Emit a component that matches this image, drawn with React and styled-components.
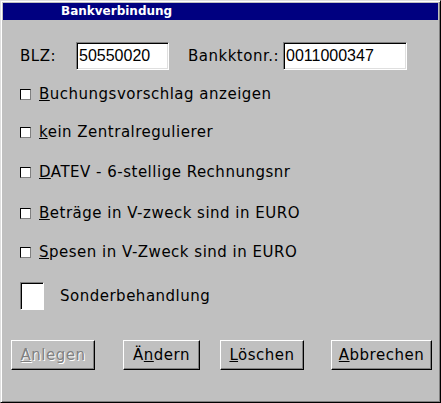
import React from 'react';
import styled, { createGlobalStyle } from 'styled-components';

const Global = createGlobalStyle`
  html, body { margin: 0; padding: 0; background: #c0c0c0; }
  body { font-family: "DejaVu Sans", Verdana, sans-serif; }
`;

const Window = styled.div`
  box-sizing: border-box;
  width: 441px;
  height: 403px;
  background: #c0c0c0;
  border: 1px solid;
  border-color: #dfdfdf #000 #000 #dfdfdf;
  box-shadow: inset 1px 1px 0 #fff, inset -1px -1px 0 #808080;
  padding: 2px;
  display: flex;
  flex-direction: column;
`;

const TitleBar = styled.div`
  height: 17px;
  background: #000080;
  color: #fff;
  font-weight: bold;
  font-size: 12px;
  line-height: 17px;
  padding-left: 58px;
`;

const Body = styled.div`
  flex: 1;
  display: flex;
  flex-direction: column;
  padding: 22px 0 0 17px;
  font-size: 15px;
  letter-spacing: 0.5px;
  color: #000;
`;

const FieldRow = styled.div`
  display: flex;
  align-items: center;
  height: 28px;
`;

const Label = styled.span`
  box-sizing: border-box;
  width: ${p => p.$w}px;
  padding-left: ${p => p.$pl || 0}px;
`;

const Input = styled.div`
  box-sizing: border-box;
  width: ${p => p.$w}px;
  height: 28px;
  background: #fff;
  border: 1px solid;
  border-color: #808080 #fff #fff #808080;
  box-shadow: inset 1px 1px 0 #000, inset -1px -1px 0 #dfdfdf;
  padding: 3px 0 0 2px;
  font-family: "Liberation Sans", Arial, sans-serif;
  font-size: 16px;
  letter-spacing: 0;
  line-height: 20px;
`;

const Checks = styled.div`
  display: flex;
  flex-direction: column;
  margin-top: 14px;
`;

const CheckRow = styled.div`
  display: flex;
  align-items: center;
  height: 20px;
  margin-bottom: ${p => p.$mb}px;
`;

const Box = styled.span`
  box-sizing: border-box;
  flex: none;
  width: 11px;
  height: 11px;
  background: #fff;
  border: 1px solid;
  border-color: #000 #808080 #808080 #000;
  margin-right: 8px;
`;

const U = styled.span`
  text-decoration: underline;
`;

const BigRow = styled.div`
  display: flex;
  align-items: center;
  height: 28px;
`;

const BigBox = styled.span`
  box-sizing: border-box;
  width: 24px;
  height: 28px;
  background: #fff;
  border: 1px solid;
  border-color: #808080 #fff #fff #808080;
  box-shadow: inset 1px 1px 0 #000;
  margin-right: 16px;
`;

const ButtonBar = styled.div`
  display: flex;
  margin-top: 30px;
  margin-left: -9px;
`;

const Button = styled.button`
  box-sizing: border-box;
  width: ${p => p.$w}px;
  height: 30px;
  margin-right: ${p => p.$mr}px;
  padding: 0;
  background: #c0c0c0;
  border: 1px solid;
  border-color: #fff #000 #000 #fff;
  box-shadow: inset -1px -1px 0 #808080;
  font-family: "DejaVu Sans", Verdana, sans-serif;
  font-size: 15px;
  letter-spacing: 0.5px;
  color: ${p => (p.disabled ? '#808080' : '#000')};
  text-shadow: ${p => (p.disabled ? '1px 1px 0 #fff' : 'none')};
`;

const checks = [
  { k: 'B', rest: 'uchungsvorschlag anzeigen', mb: 18 },
  { k: 'k', rest: 'ein Zentralregulierer', mb: 20 },
  { k: 'D', rest: 'ATEV - 6-stellige Rechnungsnr', mb: 21 },
  { k: 'B', rest: 'eträge in V-zweck sind in EURO', mb: 19 },
  { k: 'S', rest: 'pesen in V-Zweck sind in EURO', mb: 20 },
];

export default function App() {
  return (
    <>
      <Global />
      <Window>
        <TitleBar>Bankverbindung</TitleBar>
        <Body>
          <FieldRow>
            <Label $w={56}>BLZ:</Label>
            <Input $w={93}>50550020</Input>
            <Label $w={114} $pl={19}>Bankktonr.:</Label>
            <Input $w={124}>0011000347</Input>
          </FieldRow>
          <Checks>
            {checks.map((c, i) => (
              <CheckRow key={i} $mb={c.mb}>
                <Box />
                <span><U>{c.k}</U>{c.rest}</span>
              </CheckRow>
            ))}
            <BigRow>
              <BigBox />
              <span>Sonderbehandlung</span>
            </BigRow>
          </Checks>
          <ButtonBar>
            <Button $w={84} $mr={28} disabled><U>A</U>nlegen</Button>
            <Button $w={77} $mr={20}>Ä<U>n</U>dern</Button>
            <Button $w={84} $mr={27}><U>L</U>öschen</Button>
            <Button $w={101} $mr={0}><U>A</U>bbrechen</Button>
          </ButtonBar>
        </Body>
      </Window>
    </>
  );
}
